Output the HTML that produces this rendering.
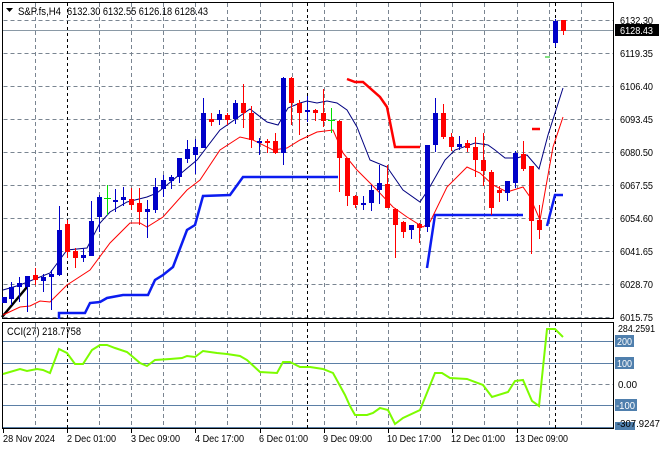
<!DOCTYPE html>
<html><head><meta charset="utf-8"><style>
html,body{margin:0;padding:0;background:#fff;}
svg{display:block;font-family:"Liberation Sans",sans-serif;}
text{font-size:10.5px;fill:#000;}
</style></head><body>
<svg width="660" height="450" viewBox="0 0 660 450" xmlns="http://www.w3.org/2000/svg">
<rect width="660" height="450" fill="#fff"/>
<g stroke="#7a8591" stroke-width="1" stroke-dasharray="4,3" fill="none">
<path d="M3.5 20.5H613M3.5 53.5H613M3.5 86.5H613M3.5 119.5H613M3.5 152.5H613M3.5 185.5H613M3.5 218.5H613M3.5 251.5H613M3.5 284.5H613M3.5 317.5H613"/>
<path d="M35.5 3V318M99.5 3V318M131.5 3V318M163.5 3V318M195.5 3V318M227.5 3V318M260.5 3V318M292.5 3V318M324.5 3V318M356.5 3V318M388.5 3V318M420.5 3V318M452.5 3V318M484.5 3V318M517.5 3V318M549.5 3V318M581.5 3V318"/>
<path d="M3.5 341.5H613M3.5 384.5H613"/>
<path d="M35.5 323V428M99.5 323V428M131.5 323V428M163.5 323V428M195.5 323V428M227.5 323V428M260.5 323V428M292.5 323V428M324.5 323V428M356.5 323V428M388.5 323V428M420.5 323V428M452.5 323V428M484.5 323V428M517.5 323V428M549.5 323V428M581.5 323V428"/>
</g>
<g stroke="#5b7fa6" stroke-width="1"><path d="M3 341.5H613M3 363.5H613M3 405.5H613M3 427.5H613"/></g>
<g stroke="#000" stroke-dasharray="3,3"><path d="M67.5 3V318M307.5 3V318M555.5 3V318M67.5 323V428M307.5 323V428M555.5 323V428"/></g>
<path d="M3 30.5H613" stroke="#8a99a6"/>
<rect x="2.5" y="2.5" width="611" height="316" fill="none" stroke="#000"/>
<rect x="2.5" y="322.5" width="611" height="106" fill="none" stroke="#000"/>

<g fill="none" stroke-width="2.5">
<polyline stroke="#0b1cf0" points="59,319 59,313 85,313 90,303 100,302 107,298 123,295 148,295 155,280 163,275 173,267 187,230 195,225 203,196 230,195 243,177 338,177"/>
<polyline stroke="#0b1cf0" points="427,268 435,215 523,215"/>
<polyline stroke="#0b1cf0" points="547,226 555,195 563,195"/>
<polyline stroke="#f00" points="347,79 355,82 363,82 380,97 387,107 395,147 420,147"/>
<path stroke="#f00" d="M532 129H540"/>
<path stroke="#00c000" stroke-width="1" d="M545 57H550"/>
<path stroke="#000" d="M2 317L27 287"/>
</g>
<polyline fill="none" stroke="#000080" stroke-width="1" points="3,290 20,285 50,273 67,250 87,248 100,223 110,212 127,202 147,197 157,193 173,180 197,160 220,130 250,109 267,122 278,125 288,108 300,103 307,101 317,103 327,101 337,103 347,110 357,127 370,160 387,167 403,190 420,202 428,190 436,176 445,160 455,150 475,143 488,145 495,150 505,158 517,158 527,155 539,169 548,135 556,110 563,88"/>
<polyline fill="none" stroke="#f00" stroke-width="1" points="3,315 20,307 30,306 40,301 50,302 67,285 90,270 110,243 130,223 140,223 147,227 163,217 187,190 200,180 220,150 240,137 253,140 273,150 287,148 300,140 317,132 333,130 343,153 357,170 377,190 393,207 407,217 423,227 430,222 447,187 467,167 480,173 493,185 507,192 523,187 530,197 540,220 553,147 563,117"/>

<g stroke-width="1">
<path stroke="#0000c8" d="M11.5 282V305M19.5 277V302M27.5 276V312M43.5 274V292M51.5 270V310M59.5 206V276M83.5 248V262M91.5 201V256M99.5 195V232M115.5 189V212M123.5 187V206M147.5 200V238M155.5 178V213M163.5 175V197M171.5 175V189M179.5 158V183M187.5 140V163M195.5 139V174M203.5 98V148M219.5 110V125M235.5 100V124M259.5 138V155M283.5 77V165M307.5 96V122M363.5 196V210M371.5 185V211M379.5 165V204M411.5 225V239M427.5 145V232M435.5 98V152M459.5 136V150M507.5 181V201M515.5 151V188M555.5 19V47"/>
<path stroke="#f00" d="M35.5 268V285M67.5 220V258M75.5 248V268M131.5 188V210M139.5 188V225M211.5 113V126M227.5 113V125M243.5 84V128M251.5 106V148M267.5 139V153M275.5 133V154M291.5 77V125M299.5 100V135M315.5 109V121M323.5 89V127M339.5 120V192M347.5 158V206M355.5 195V208M387.5 165V208M395.5 208V258M403.5 221V238M419.5 223V243M443.5 104V139M451.5 133V151M467.5 140V152M475.5 137V177M483.5 133V186M491.5 170V215M499.5 186V202M523.5 141V171M531.5 166V254M539.5 205V239M563.5 20V35"/>
<path stroke="#00e000" d="M107.5 185V215M104 198.5H111M331.5 108V133M328 120.5H335"/>
<g fill="#0000c8">
<rect x="2" y="297" width="5" height="6"/><rect x="9" y="287" width="5" height="12"/><rect x="17" y="283" width="5" height="4"/><rect x="25" y="276" width="5" height="11"/><rect x="41" y="277" width="5" height="4"/><rect x="49" y="274" width="5" height="3"/><rect x="57" y="230" width="5" height="45"/><rect x="81" y="255" width="5" height="3"/><rect x="89" y="221" width="5" height="35"/><rect x="97" y="197" width="5" height="20"/><rect x="113" y="200" width="5" height="2"/><rect x="121" y="197" width="5" height="3"/><rect x="145" y="209" width="5" height="3"/><rect x="153" y="187" width="5" height="23"/><rect x="161" y="180" width="5" height="9"/><rect x="169" y="177" width="5" height="4"/><rect x="177" y="158" width="5" height="19"/><rect x="185" y="149" width="5" height="10"/><rect x="193" y="147" width="5" height="8"/><rect x="201" y="113" width="5" height="35"/><rect x="217" y="114" width="5" height="6"/><rect x="233" y="103" width="5" height="16"/><rect x="257" y="141" width="5" height="2"/><rect x="281" y="78" width="5" height="75"/><rect x="305" y="110" width="5" height="2"/><rect x="361" y="203" width="5" height="2"/><rect x="369" y="190" width="5" height="13"/><rect x="377" y="183" width="5" height="7"/><rect x="409" y="225" width="5" height="5"/><rect x="425" y="145" width="5" height="82"/><rect x="433" y="113" width="5" height="32"/><rect x="457" y="144" width="5" height="3"/><rect x="505" y="181" width="5" height="12"/><rect x="513" y="153" width="5" height="30"/><rect x="553" y="21" width="5" height="22"/>
</g>
<g fill="#f00">
<rect x="33" y="275" width="5" height="5"/><rect x="65" y="224" width="5" height="28"/><rect x="73" y="251" width="5" height="7"/><rect x="129" y="199" width="5" height="6"/><rect x="137" y="203" width="5" height="9"/><rect x="209" y="119" width="5" height="3"/><rect x="225" y="115" width="5" height="5"/><rect x="241" y="103" width="5" height="10"/><rect x="249" y="113" width="5" height="27"/><rect x="265" y="141" width="5" height="2"/><rect x="273" y="141" width="5" height="12"/><rect x="289" y="78" width="5" height="25"/><rect x="297" y="103" width="5" height="10"/><rect x="313" y="110" width="5" height="3"/><rect x="321" y="113" width="5" height="8"/><rect x="337" y="121" width="5" height="37"/><rect x="345" y="158" width="5" height="38"/><rect x="353" y="196" width="5" height="9"/><rect x="385" y="184" width="5" height="24"/><rect x="393" y="209" width="5" height="16"/><rect x="401" y="222" width="5" height="10"/><rect x="417" y="224" width="5" height="4"/><rect x="441" y="113" width="5" height="24"/><rect x="449" y="137" width="5" height="10"/><rect x="465" y="143" width="5" height="5"/><rect x="473" y="147" width="5" height="13"/><rect x="481" y="160" width="5" height="11"/><rect x="489" y="172" width="5" height="36"/><rect x="497" y="190" width="5" height="3"/><rect x="521" y="154" width="5" height="15"/><rect x="529" y="166" width="5" height="55"/><rect x="537" y="220" width="5" height="10"/><rect x="561" y="20" width="5" height="11"/>
</g>
</g>

<polyline fill="none" stroke="#7cfc00" stroke-width="2" points="3,374 20,369 27,371 37,369 43,370 50,373 59,349 67,353 75,364 83,364 92,350 100,345 107,345 115,348 127,352 133,357 140,363 147,366 155,360 170,359 182,358 187,356 195,357 203,351 217,353 227,354 240,356 247,360 260,372 277,373 283,362 290,362 300,367 310,367 323,369 333,373 345,395 350,406 355,415 367,415 373,413 380,408 388,410 395,424 403,418 420,410 435,373 442,373 450,378 467,379 483,385 492,397 508,392 515,381 523,380 532,401 539,406 547,329 555,329 563,337"/>

<path d="M6 8H13L9.5 12Z" fill="#000"/>
<text x="18" y="15" style="font-size:11px" textLength="43" lengthAdjust="spacingAndGlyphs">S&amp;P.fs,H4</text>
<text x="67" y="15" style="font-size:11px" textLength="141" lengthAdjust="spacingAndGlyphs">6132.30 6132.55 6126.18 6128.43</text>
<text x="7" y="335" style="font-size:11px" textLength="74" lengthAdjust="spacingAndGlyphs">CCI(27) 218.7758</text>

<g style="font-size:10.5px">
<text x="620" y="24" textLength="33" lengthAdjust="spacingAndGlyphs">6132.30</text>
<rect x="615" y="24" width="44" height="12" fill="#000"/>
<text x="620" y="34" style="fill:#fff" textLength="33" lengthAdjust="spacingAndGlyphs">6128.43</text>
<text x="620" y="57" textLength="33" lengthAdjust="spacingAndGlyphs">6119.35</text>
<text x="620" y="90" textLength="33" lengthAdjust="spacingAndGlyphs">6106.40</text>
<text x="620" y="123" textLength="33" lengthAdjust="spacingAndGlyphs">6093.45</text>
<text x="620" y="156" textLength="33" lengthAdjust="spacingAndGlyphs">6080.50</text>
<text x="620" y="189" textLength="33" lengthAdjust="spacingAndGlyphs">6067.55</text>
<text x="620" y="222" textLength="33" lengthAdjust="spacingAndGlyphs">6054.60</text>
<text x="620" y="255" textLength="33" lengthAdjust="spacingAndGlyphs">6041.65</text>
<text x="620" y="288" textLength="33" lengthAdjust="spacingAndGlyphs">6028.70</text>
<text x="620" y="321" textLength="33" lengthAdjust="spacingAndGlyphs">6015.75</text>
<text x="618" y="332" textLength="37" lengthAdjust="spacingAndGlyphs">284.2591</text>
<rect x="615" y="335" width="19" height="12" fill="#4f7fad"/><text x="617" y="345" style="fill:#fff" textLength="15" lengthAdjust="spacingAndGlyphs">200</text>
<rect x="615" y="357" width="19" height="12" fill="#4f7fad"/><text x="617" y="367" style="fill:#fff" textLength="15" lengthAdjust="spacingAndGlyphs">100</text>
<text x="618" y="388" textLength="19" lengthAdjust="spacingAndGlyphs">0.00</text>
<rect x="615" y="399" width="22" height="12" fill="#4f7fad"/><text x="616" y="409" style="fill:#fff" textLength="19" lengthAdjust="spacingAndGlyphs">-100</text>
<rect x="615" y="422" width="20" height="8" fill="#4f7fad"/>
<text x="617" y="427" textLength="43" lengthAdjust="spacingAndGlyphs">-307.9247</text>
</g>
<g stroke="#000"><path d="M3.5 429V433M67.5 429V433M131.5 429V433M195.5 429V433M260.5 429V433M324.5 429V433M388.5 429V433M452.5 429V433M517.5 429V433"/></g>
<g style="font-size:10.5px">
<text x="3" y="442" textLength="52" lengthAdjust="spacingAndGlyphs">28 Nov 2024</text>
<text x="67" y="442" textLength="49" lengthAdjust="spacingAndGlyphs">2 Dec 01:00</text>
<text x="131" y="442" textLength="49" lengthAdjust="spacingAndGlyphs">3 Dec 09:00</text>
<text x="195" y="442" textLength="49" lengthAdjust="spacingAndGlyphs">4 Dec 17:00</text>
<text x="259" y="442" textLength="49" lengthAdjust="spacingAndGlyphs">6 Dec 01:00</text>
<text x="323" y="442" textLength="49" lengthAdjust="spacingAndGlyphs">9 Dec 09:00</text>
<text x="387" y="442" textLength="54" lengthAdjust="spacingAndGlyphs">10 Dec 17:00</text>
<text x="451" y="442" textLength="54" lengthAdjust="spacingAndGlyphs">12 Dec 01:00</text>
<text x="515" y="442" textLength="53" lengthAdjust="spacingAndGlyphs">13 Dec 09:00</text>
</g>
</svg>
</body></html>
